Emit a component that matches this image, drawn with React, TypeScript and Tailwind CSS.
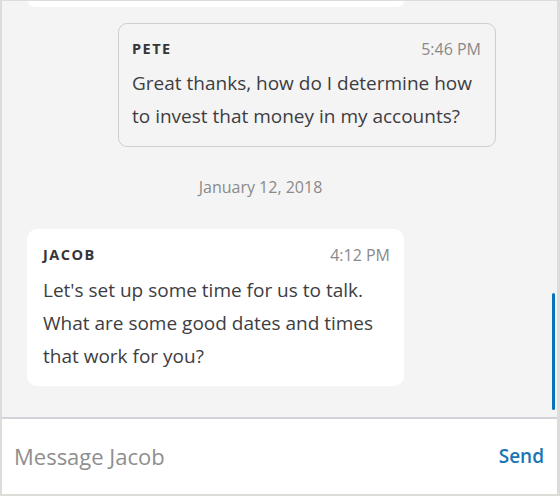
import React from "react";

export default function App() {
  const font = { fontFamily: '"Open Sans", "Liberation Sans", sans-serif' };
  return (
    <div
      className="w-[560px] h-[496px] flex flex-col bg-[#dcdcd8] pl-[2px] pr-[3px] pt-[1px] pb-[2px]"
      style={font}
    >
      <div className="relative flex-1 bg-[#f4f4f4] flex flex-col overflow-hidden">
        <div className="ml-[26px] w-[376px] h-[6px] bg-white rounded-b-[10px]" />
        <div className="mt-[16px] ml-[116px] w-[378px] h-[124px] border border-[#cfcfcf] rounded-[9px] pl-[13px] pr-[14px] pt-[14px]">
          <div className="flex justify-between items-center h-[22px]">
            <span className="text-[14.5px] font-bold tracking-[0.1em] text-[#35353a]">PETE</span>
            <span className="text-[16px] text-[#8a8a8a]">5:46 PM</span>
          </div>
          <p className="mt-[7px] text-[19px] leading-[33px] text-[#3d3d42]">
            Great thanks, how do I determine how to invest that money in my accounts?
          </p>
        </div>
        <div className="mt-[30px] pr-[38px] text-center text-[16px] text-[#8a8a8a] leading-[20px]">
          January 12, 2018
        </div>
        <div className="mt-[32px] ml-[25px] w-[377px] h-[157px] bg-white rounded-[10px] pl-[16px] pr-[14px] pt-[15px]">
          <div className="flex justify-between items-center h-[22px]">
            <span className="text-[14.5px] font-bold tracking-[0.1em] text-[#35353a]">JACOB</span>
            <span className="text-[16px] text-[#8a8a8a]">4:12 PM</span>
          </div>
          <p className="mt-[8px] text-[19px] leading-[33px] text-[#3d3d42] pr-[12px]">
            Let's set up some time for us to talk. What are some good dates and times that work for you?
          </p>
        </div>
        <div className="absolute right-[2px] top-[292px] w-[3px] h-[117px] rounded-full bg-[#0a72b8]" />
      </div>
      <div className="h-[2px] bg-[#d2d2d8]" />
      <div className="h-[75px] bg-white flex items-center justify-between pl-[12px] pr-[13px]">
        <span className="text-[22px] text-[#8e8e8e]">Message Jacob</span>
        <span className="text-[19px] font-semibold text-[#1a74b6]">Send</span>
      </div>
    </div>
  );
}
